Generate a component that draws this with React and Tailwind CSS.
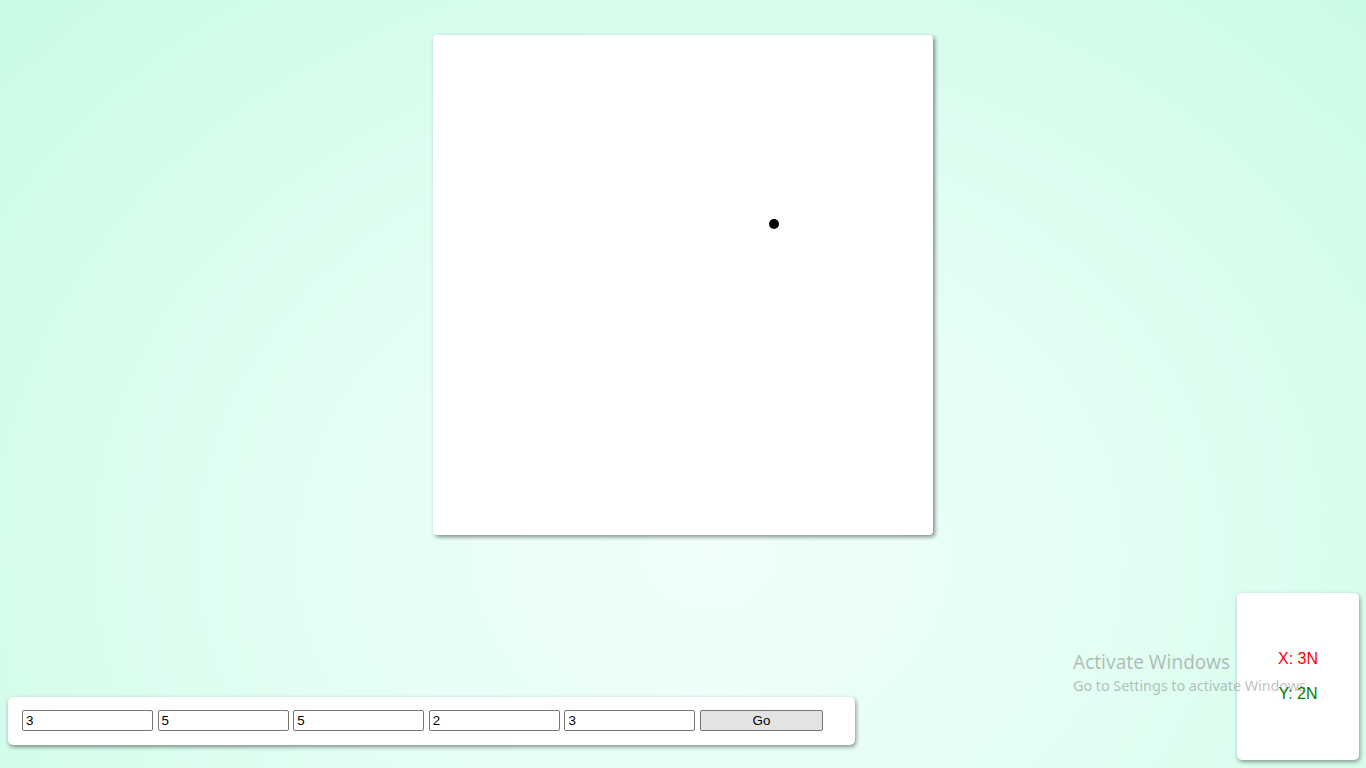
import React, { useState } from 'react'

export default function App() {
  const [vals, setVals] = useState(['3', '5', '5', '2', '3'])
  const [pos] = useState({ x: 341, y: 189 })

  const update = (i, v) => {
    const next = [...vals]
    next[i] = v
    setVals(next)
  }

  return (
    <div
      className="relative w-full h-[768px] overflow-hidden font-['Liberation_Sans',Arial,sans-serif] bg-[radial-gradient(ellipse_75%_110%_at_52%_72%,#f0fffa_0%,#e4fef3_40%,#c6fbe5_100%)]"
    >
      {/* Canvas */}
      <div className="flex justify-center pt-[35px]">
        <div className="relative w-[500px] h-[500px] bg-white rounded-[4px] shadow-[2px_2px_4px_rgba(0,0,0,0.45)]">
          <div
            className="absolute w-[10px] h-[10px] rounded-full bg-black"
            style={{ left: pos.x - 5, top: pos.y - 5 }}
          />
        </div>
      </div>

      {/* Controls */}
      <div className="absolute left-[8px] bottom-[23px] w-[847px] h-[48px] bg-white rounded-[5px] shadow-[1px_2px_4px_rgba(0,0,0,0.45)] pl-[14px] pt-[13px]">
        <div className="flex gap-[4.6px]">
          {vals.map((v, i) => (
            <input
              key={i}
              type="text"
              value={v}
              onChange={(e) => update(i, e.target.value)}
              className="w-[131px] h-[21px] border border-[#767676] rounded-[2px] px-[3px] text-[13.33px] text-black bg-white outline-none"
            />
          ))}
          <button className="w-[123px] h-[21px] border border-[#767676] rounded-[2px] bg-[#e3e3e3] text-[13.33px] text-black">
            Go
          </button>
        </div>
      </div>

      {/* Readout */}
      <div className="absolute left-[1237px] top-[593px] w-[122px] h-[167px] bg-white rounded-[5px] shadow-[1px_2px_4px_rgba(0,0,0,0.4)] flex flex-col items-center justify-center gap-[11px] text-[16px] leading-[24px]">
        <div className="text-[#ff0000]">X: 3N</div>
        <div className="text-[#008000]">Y: 2N</div>
      </div>

      {/* Watermark */}
      <div className="absolute left-[1073px] top-[649px] z-10 pointer-events-none font-['Noto_Sans',sans-serif] text-[rgba(110,110,110,0.45)]">
        <div className="text-[19px] leading-[26px]">Activate Windows</div>
        <div className="text-[14.5px] leading-[20px] tracking-[-0.1px]">Go to Settings to activate Windows.</div>
      </div>
    </div>
  )
}
